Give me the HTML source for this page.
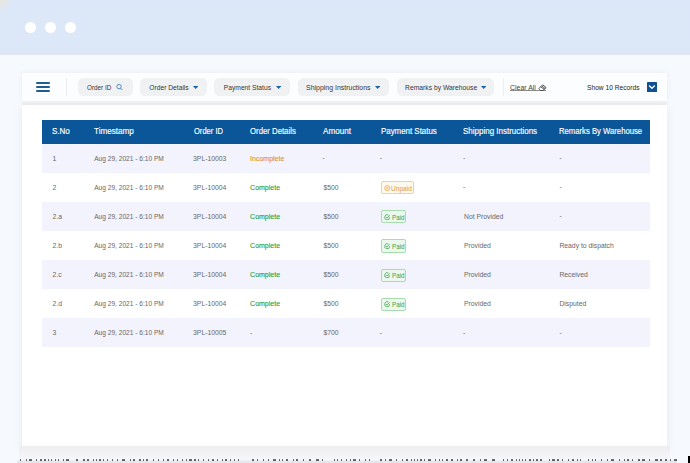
<!DOCTYPE html>
<html><head><meta charset="utf-8">
<style>
*{box-sizing:border-box;margin:0;padding:0}
html,body{width:690px;height:463px;overflow:hidden}
body{background:#f6f9fd;font-family:"Liberation Sans",sans-serif;position:relative}
.topbar{position:absolute;left:0;top:0;width:690px;height:54.8px;background:linear-gradient(#dce8f9 0,#dce8f8 51.5px,#e0e5f2 52.5px,#dfe5f1 54.8px)}
.dot{position:absolute;top:21.7px;width:11px;height:11px;border-radius:50%;background:#fff}
.toolbar{position:absolute;left:22px;top:72.5px;width:645px;height:28.5px;background:#fcfdfe;box-shadow:0 0 5px rgba(150,150,165,0.14)}
.gap{position:absolute;left:22px;top:101px;width:645px;height:3.8px;background:linear-gradient(#f3f3f5,#ededf0)}
.card{position:absolute;left:22px;top:104.8px;width:645px;height:341px;background:#fff;box-shadow:0 3px 8px rgba(150,150,165,0.18)}
.ham{position:absolute;left:36px;width:14px;height:2px;background:#215c92;border-radius:1px}
.vdiv{position:absolute;top:78px;width:1px;height:18px;background:#eceef1}
.pill{position:absolute;top:77.8px;height:18.3px;border-radius:5.5px;background:#f0f1f3}
.tt{position:absolute;top:79px;font-size:6.7px;color:#363636;line-height:18.3px;white-space:nowrap;transform-origin:0 50%}
.tri{position:absolute;top:86.1px}
.thead{position:absolute;left:41.8px;top:119.5px;width:608px;height:24px;background:#0b5599}
.th{position:absolute;top:0.5px;line-height:24px;color:#fff;font-weight:normal;font-size:8.2px;-webkit-text-stroke:0.15px #fff;white-space:nowrap;transform-origin:0 50%}
.row{position:absolute;left:41.8px;width:608px;height:29.13px}
.row.alt{background:#f2f3fc}
.td{position:absolute;font-size:6.8px;color:#686868;white-space:nowrap;line-height:29.13px;top:0}
.ts{font-size:6.6px}
.g{color:#27a23a;font-size:7px;-webkit-text-stroke:0.12px #27a23a}
.o{color:#e3922f;font-size:7px;-webkit-text-stroke:0.12px #e3922f}
.badge{position:absolute;top:8.6px;height:13.1px;border-radius:2px;font-size:6.6px;line-height:11.1px;white-space:nowrap}
.badge.paid{border:1px solid #a6dcb0;background:#ebf8ee;color:#3a9f4c;width:25px}
.badge.unpaid{border:1px solid #f2d09c;background:#fff8ec;color:#e39b3e;width:32.8px}
.badge svg{position:absolute;left:1.6px;top:2.5px}
.badge b{font-weight:normal;position:absolute;top:0.4px}
</style></head><body>
<div class="topbar"></div>
<div style="position:absolute;left:0;top:0;width:14px;height:14px;background:radial-gradient(circle at 0 0,rgba(235,230,215,0.9),rgba(220,231,248,0) 12px)"></div>
<div class="dot" style="left:24.9px"></div>
<div class="dot" style="left:45px"></div>
<div class="dot" style="left:65px"></div>

<div class="toolbar"></div>
<div class="gap"></div>
<div class="card"></div>

<div class="ham" style="top:82.4px"></div>
<div class="ham" style="top:86.05px"></div>
<div class="ham" style="top:89.7px"></div>
<div class="vdiv" style="left:65.5px"></div>

<div class="pill" style="left:77.5px;width:55.5px"></div><div class="tt" style="left:87.3px;transform:scaleX(0.95)">Order ID</div>
<svg style="position:absolute;left:116px;top:84.3px" width="8" height="8" viewBox="0 0 8 8"><circle cx="3" cy="2.6" r="2.2" fill="none" stroke="#3f7cb8" stroke-width="0.85"/><line x1="4.6" y1="4.2" x2="6.4" y2="6" stroke="#3f7cb8" stroke-width="0.95"/></svg>
<div class="pill" style="left:140px;width:66.5px"></div><div class="tt" style="left:149.3px">Order Details</div><svg class="tri" style="left:192.7px" width="5.2" height="3" viewBox="0 0 5.2 3"><path d="M0 0H5.2L2.6 3Z" fill="#1b5fa0"/></svg>
<div class="pill" style="left:214.4px;width:75.8px"></div><div class="tt" style="left:223.8px">Payment Status</div><svg class="tri" style="left:275.8px" width="5.2" height="3" viewBox="0 0 5.2 3"><path d="M0 0H5.2L2.6 3Z" fill="#1b5fa0"/></svg>
<div class="pill" style="left:297.6px;width:91.3px"></div><div class="tt" style="left:306.3px;transform:scaleX(1.04)">Shipping Instructions</div><svg class="tri" style="left:375.2px" width="5.2" height="3" viewBox="0 0 5.2 3"><path d="M0 0H5.2L2.6 3Z" fill="#1b5fa0"/></svg>
<div class="pill" style="left:396.5px;width:97.4px"></div><div class="tt" style="left:405.1px;transform:scaleX(1.01)">Remarks by Warehouse</div><svg class="tri" style="left:480.7px" width="5.2" height="3" viewBox="0 0 5.2 3"><path d="M0 0H5.2L2.6 3Z" fill="#1b5fa0"/></svg>
<div class="vdiv" style="left:502.5px"></div>
<div class="tt" style="left:509.8px;color:#444;transform:scaleX(1.04)">Clear All</div>
<div style="position:absolute;left:509.8px;top:90.2px;width:36.5px;height:0.8px;background:#8a8a8a"></div>
<svg style="position:absolute;left:537.5px;top:83.5px" width="9" height="7" viewBox="0 0 9 7"><path d="M0.8 4.6 L4.6 0.8 L8.2 3.6 L4.6 6.6 L2.8 6.6 Z M2.6 2.8 L6.4 5.4 M3.8 2.0 L7.3 4.6" fill="none" stroke="#333" stroke-width="0.8" stroke-linejoin="round"/></svg>
<div class="tt" style="left:587.4px;top:78.6px;color:#1e1e1e;font-size:6.9px;transform:scaleX(0.965)">Show 10 Records</div>
<div style="position:absolute;left:646.8px;top:82.2px;width:9.8px;height:9.6px;background:#0e5091;border-radius:0.6px"></div>
<svg style="position:absolute;left:646.8px;top:82.2px" width="10" height="10" viewBox="0 0 10 10"><path d="M2.1 3.5 L4.95 6.3 L7.8 3.5" fill="none" stroke="#fff" stroke-width="1.25"/></svg>

<div class="thead">
<div class="th" style="left:10.7px;transform:scaleX(0.979)">S.No</div>
<div class="th" style="left:52.4px;transform:scaleX(0.992)">Timestamp</div>
<div class="th" style="left:151.8px;transform:scaleX(0.922)">Order ID</div>
<div class="th" style="left:208.3px;transform:scaleX(0.949)">Order Details</div>
<div class="th" style="left:281.7px;transform:scaleX(0.99)">Amount</div>
<div class="th" style="left:339.4px;transform:scaleX(0.965)">Payment Status</div>
<div class="th" style="left:421.2px;transform:scaleX(0.975)">Shipping Instructions</div>
<div class="th" style="left:517.1px;transform:scaleX(0.94)">Remarks By Warehouse</div>
</div>

<div id="rows">
<div class="row alt" style="top:143.50px">
<div class="td" style="left:10.7px">1</div>
<div class="td ts" style="left:52.4px">Aug 29, 2021 - 6:10 PM</div>
<div class="td" style="left:151.3px">3PL-10003</div>
<div class="td o" style="left:208.3px">Incomplete</div>
<div class="td" style="left:280.7px;top:-0.7px">-</div>
<div class="td" style="left:337.9px;top:-0.7px">-</div>
<div class="td" style="left:421.2px;top:-0.7px">-</div>
<div class="td" style="left:517.6px;top:-0.7px">-</div>
</div>
<div class="row" style="top:172.63px">
<div class="td" style="left:10.7px">2</div>
<div class="td ts" style="left:52.4px">Aug 29, 2021 - 6:10 PM</div>
<div class="td" style="left:151.3px">3PL-10004</div>
<div class="td g" style="left:208.3px">Complete</div>
<div class="td" style="left:281.7px">$500</div>
<div class="badge unpaid" style="left:339.2px"><svg width="6.4" height="6.4" viewBox="0 0 6.4 6.4"><circle cx="3.2" cy="3.2" r="2.5" fill="none" stroke="currentColor" stroke-width="0.7"/><path d="M2.3 2.3 L4.1 4.1 M4.1 2.3 L2.3 4.1" fill="none" stroke="currentColor" stroke-width="0.65"/></svg><b style="left:9px">Unpaid</b></div>
<div class="td" style="left:421.2px;top:-0.7px">-</div>
<div class="td" style="left:517.6px;top:-0.7px">-</div>
</div>
<div class="row alt" style="top:201.76px">
<div class="td" style="left:10.7px">2.a</div>
<div class="td ts" style="left:52.4px">Aug 29, 2021 - 6:10 PM</div>
<div class="td" style="left:151.3px">3PL-10004</div>
<div class="td g" style="left:208.3px">Complete</div>
<div class="td" style="left:281.7px">$500</div>
<div class="badge paid" style="left:339.2px"><svg width="6.4" height="6.4" viewBox="0 0 6.4 6.4"><path d="M5.7 3.2 A2.5 2.5 0 1 1 4.4 1.0" fill="none" stroke="currentColor" stroke-width="0.75"/><path d="M2.0 3.0 L3.0 4.0 L5.6 1.3" fill="none" stroke="currentColor" stroke-width="0.75"/></svg><b style="left:9.7px;transform:scaleX(0.95);transform-origin:0 50%">Paid</b></div>
<div class="td" style="left:422.2px">Not Provided</div>
<div class="td" style="left:517.6px;top:-0.7px">-</div>
</div>
<div class="row" style="top:230.89px">
<div class="td" style="left:10.7px">2.b</div>
<div class="td ts" style="left:52.4px">Aug 29, 2021 - 6:10 PM</div>
<div class="td" style="left:151.3px">3PL-10004</div>
<div class="td g" style="left:208.3px">Complete</div>
<div class="td" style="left:281.7px">$500</div>
<div class="badge paid" style="left:339.2px"><svg width="6.4" height="6.4" viewBox="0 0 6.4 6.4"><path d="M5.7 3.2 A2.5 2.5 0 1 1 4.4 1.0" fill="none" stroke="currentColor" stroke-width="0.75"/><path d="M2.0 3.0 L3.0 4.0 L5.6 1.3" fill="none" stroke="currentColor" stroke-width="0.75"/></svg><b style="left:9.7px;transform:scaleX(0.95);transform-origin:0 50%">Paid</b></div>
<div class="td" style="left:422.2px">Provided</div>
<div class="td" style="left:517.6px">Ready to dispatch</div>
</div>
<div class="row alt" style="top:260.02px">
<div class="td" style="left:10.7px">2.c</div>
<div class="td ts" style="left:52.4px">Aug 29, 2021 - 6:10 PM</div>
<div class="td" style="left:151.3px">3PL-10004</div>
<div class="td g" style="left:208.3px">Complete</div>
<div class="td" style="left:281.7px">$500</div>
<div class="badge paid" style="left:339.2px"><svg width="6.4" height="6.4" viewBox="0 0 6.4 6.4"><path d="M5.7 3.2 A2.5 2.5 0 1 1 4.4 1.0" fill="none" stroke="currentColor" stroke-width="0.75"/><path d="M2.0 3.0 L3.0 4.0 L5.6 1.3" fill="none" stroke="currentColor" stroke-width="0.75"/></svg><b style="left:9.7px;transform:scaleX(0.95);transform-origin:0 50%">Paid</b></div>
<div class="td" style="left:422.2px">Provided</div>
<div class="td" style="left:517.6px">Received</div>
</div>
<div class="row" style="top:289.15px">
<div class="td" style="left:10.7px">2.d</div>
<div class="td ts" style="left:52.4px">Aug 29, 2021 - 6:10 PM</div>
<div class="td" style="left:151.3px">3PL-10004</div>
<div class="td g" style="left:208.3px">Complete</div>
<div class="td" style="left:281.7px">$500</div>
<div class="badge paid" style="left:339.2px"><svg width="6.4" height="6.4" viewBox="0 0 6.4 6.4"><path d="M5.7 3.2 A2.5 2.5 0 1 1 4.4 1.0" fill="none" stroke="currentColor" stroke-width="0.75"/><path d="M2.0 3.0 L3.0 4.0 L5.6 1.3" fill="none" stroke="currentColor" stroke-width="0.75"/></svg><b style="left:9.7px;transform:scaleX(0.95);transform-origin:0 50%">Paid</b></div>
<div class="td" style="left:422.2px">Provided</div>
<div class="td" style="left:517.6px">Disputed</div>
</div>
<div class="row alt" style="top:318.28px">
<div class="td" style="left:10.7px">3</div>
<div class="td ts" style="left:52.4px">Aug 29, 2021 - 6:10 PM</div>
<div class="td" style="left:151.3px">3PL-10005</div>
<div class="td" style="left:208.3px">-</div>
<div class="td" style="left:281.7px">$700</div>
<div class="td" style="left:337.9px;top:-0.7px">-</div>
<div class="td" style="left:421.2px;top:-0.7px">-</div>
<div class="td" style="left:517.6px;top:-0.7px">-</div>
</div>
</div>
<svg style="position:absolute;left:0;top:0" width="690" height="463" viewBox="0 0 690 463"><defs><linearGradient id="sh" x1="0" y1="0" x2="0" y2="1"><stop offset="0" stop-color="#eeeef1"/><stop offset="1" stop-color="#f5f6f9"/></linearGradient></defs><rect x="19" y="445.8" width="651" height="14" fill="url(#sh)"/><rect x="17" y="460.6" width="660" height="2.4" fill="#e6e7ea"/><g fill="#1a1a1a"><rect x="20" y="459.4" width="1" height="1.3"/><rect x="26" y="459.4" width="1" height="1.3"/><rect x="29" y="459.4" width="3" height="1.3"/><rect x="36" y="459.4" width="1" height="1.3"/><rect x="40" y="459.4" width="2" height="1.3"/><rect x="44" y="459.4" width="2" height="1.3"/><rect x="48" y="459.4" width="1" height="1.3"/><rect x="51" y="459.4" width="1" height="1.3"/><rect x="55" y="459.4" width="1" height="1.3"/><rect x="58" y="459.4" width="1" height="1.3"/><rect x="63" y="459.4" width="1" height="1.3"/><rect x="66" y="459.4" width="3" height="1.3"/><rect x="76" y="459.4" width="2" height="1.3"/><rect x="83" y="459.4" width="2" height="1.3"/><rect x="87" y="459.4" width="2" height="1.3"/><rect x="93" y="459.4" width="1" height="1.3"/><rect x="96" y="459.4" width="1" height="1.3"/><rect x="99" y="459.4" width="2" height="1.3"/><rect x="103" y="459.4" width="1" height="1.3"/><rect x="107" y="459.4" width="1" height="1.3"/><rect x="112" y="459.4" width="1" height="1.3"/><rect x="117" y="459.4" width="1" height="1.3"/><rect x="122" y="459.4" width="3" height="1.3"/><rect x="130" y="459.4" width="1" height="1.3"/><rect x="133" y="459.4" width="2" height="1.3"/><rect x="139" y="459.4" width="2" height="1.3"/><rect x="143" y="459.4" width="1" height="1.3"/><rect x="146" y="459.4" width="2" height="1.3"/><rect x="153" y="459.4" width="1" height="1.3"/><rect x="158" y="459.4" width="1" height="1.3"/><rect x="163" y="459.4" width="1" height="1.3"/><rect x="167" y="459.4" width="2" height="1.3"/><rect x="173" y="459.4" width="1" height="1.3"/><rect x="177" y="459.4" width="1" height="1.3"/><rect x="182" y="459.4" width="1" height="1.3"/><rect x="186" y="459.4" width="1" height="1.3"/><rect x="189" y="459.4" width="3" height="1.3"/><rect x="194" y="459.4" width="2" height="1.3"/><rect x="198" y="459.4" width="1" height="1.3"/><rect x="203" y="459.4" width="1" height="1.3"/><rect x="208" y="459.4" width="1" height="1.3"/><rect x="212" y="459.4" width="2" height="1.3"/><rect x="217" y="459.4" width="1" height="1.3"/><rect x="222" y="459.4" width="1" height="1.3"/><rect x="225" y="459.4" width="2" height="1.3"/><rect x="230" y="459.4" width="1" height="1.3"/><rect x="234" y="459.4" width="1" height="1.3"/><rect x="238" y="459.4" width="1" height="1.3"/><rect x="252" y="459.4" width="2" height="1.3"/><rect x="257" y="459.4" width="1" height="1.3"/><rect x="263" y="459.4" width="1" height="1.3"/><rect x="268" y="459.4" width="1" height="1.3"/><rect x="273" y="459.4" width="3" height="1.3"/><rect x="279" y="459.4" width="1" height="1.3"/><rect x="282" y="459.4" width="1" height="1.3"/><rect x="286" y="459.4" width="2" height="1.3"/><rect x="293" y="459.4" width="1" height="1.3"/><rect x="296" y="459.4" width="2" height="1.3"/><rect x="303" y="459.4" width="1" height="1.3"/><rect x="309" y="459.4" width="2" height="1.3"/><rect x="316" y="459.4" width="3" height="1.3"/><rect x="322" y="459.4" width="1" height="1.3"/><rect x="334" y="459.4" width="1" height="1.3"/><rect x="337" y="459.4" width="1" height="1.3"/><rect x="341" y="459.4" width="1" height="1.3"/><rect x="346" y="459.4" width="1" height="1.3"/><rect x="350" y="459.4" width="1" height="1.3"/><rect x="353" y="459.4" width="3" height="1.3"/><rect x="359" y="459.4" width="1" height="1.3"/><rect x="365" y="459.4" width="1" height="1.3"/><rect x="369" y="459.4" width="1" height="1.3"/><rect x="380" y="459.4" width="2" height="1.3"/><rect x="385" y="459.4" width="1" height="1.3"/><rect x="389" y="459.4" width="3" height="1.3"/><rect x="396" y="459.4" width="1" height="1.3"/><rect x="402" y="459.4" width="1" height="1.3"/><rect x="406" y="459.4" width="2" height="1.3"/><rect x="411" y="459.4" width="1" height="1.3"/><rect x="414" y="459.4" width="1" height="1.3"/><rect x="417" y="459.4" width="1" height="1.3"/><rect x="420" y="459.4" width="2" height="1.3"/><rect x="424" y="459.4" width="1" height="1.3"/><rect x="428" y="459.4" width="3" height="1.3"/><rect x="435" y="459.4" width="1" height="1.3"/><rect x="439" y="459.4" width="1" height="1.3"/><rect x="442" y="459.4" width="1" height="1.3"/><rect x="446" y="459.4" width="2" height="1.3"/><rect x="451" y="459.4" width="2" height="1.3"/><rect x="457" y="459.4" width="1" height="1.3"/><rect x="460" y="459.4" width="2" height="1.3"/><rect x="466" y="459.4" width="2" height="1.3"/><rect x="473" y="459.4" width="2" height="1.3"/><rect x="480" y="459.4" width="1" height="1.3"/><rect x="484" y="459.4" width="3" height="1.3"/><rect x="492" y="459.4" width="3" height="1.3"/><rect x="503" y="459.4" width="1" height="1.3"/><rect x="507" y="459.4" width="1" height="1.3"/><rect x="511" y="459.4" width="2" height="1.3"/><rect x="516" y="459.4" width="1" height="1.3"/><rect x="519" y="459.4" width="1" height="1.3"/><rect x="522" y="459.4" width="1" height="1.3"/><rect x="525" y="459.4" width="1" height="1.3"/><rect x="529" y="459.4" width="2" height="1.3"/><rect x="533" y="459.4" width="1" height="1.3"/><rect x="536" y="459.4" width="2" height="1.3"/><rect x="540" y="459.4" width="2" height="1.3"/><rect x="549" y="459.4" width="1" height="1.3"/><rect x="552" y="459.4" width="3" height="1.3"/><rect x="557" y="459.4" width="2" height="1.3"/><rect x="562" y="459.4" width="1" height="1.3"/><rect x="568" y="459.4" width="1" height="1.3"/><rect x="572" y="459.4" width="2" height="1.3"/><rect x="577" y="459.4" width="1" height="1.3"/><rect x="580" y="459.4" width="1" height="1.3"/><rect x="588" y="459.4" width="1" height="1.3"/><rect x="592" y="459.4" width="1" height="1.3"/><rect x="595" y="459.4" width="1" height="1.3"/><rect x="601" y="459.4" width="1" height="1.3"/><rect x="607" y="459.4" width="1" height="1.3"/><rect x="611" y="459.4" width="3" height="1.3"/><rect x="619" y="459.4" width="1" height="1.3"/><rect x="624" y="459.4" width="1" height="1.3"/><rect x="627" y="459.4" width="2" height="1.3"/><rect x="632" y="459.4" width="1" height="1.3"/><rect x="638" y="459.4" width="2" height="1.3"/><rect x="642" y="459.4" width="3" height="1.3"/><rect x="649" y="459.4" width="1" height="1.3"/><rect x="655" y="459.4" width="3" height="1.3"/><rect x="660" y="459.4" width="2" height="1.3"/><rect x="665" y="459.4" width="2" height="1.3"/><rect x="670" y="459.4" width="1" height="1.3"/><rect x="674" y="459.4" width="3" height="1.3"/></g><rect x="688" y="456" width="2" height="7" fill="#000"/></svg>
</body></html>
